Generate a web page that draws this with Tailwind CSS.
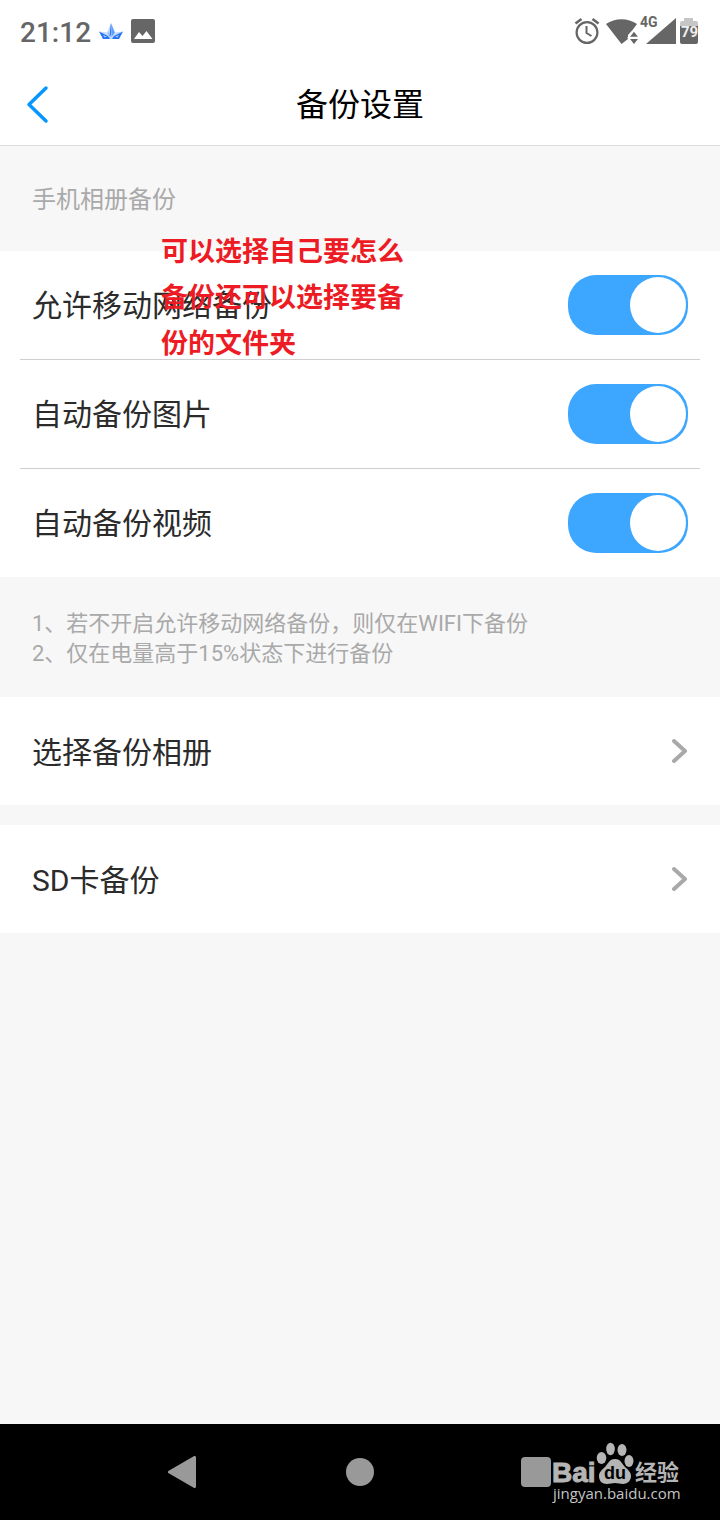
<!DOCTYPE html>
<html lang="zh-CN">
<head>
<meta charset="utf-8">
<meta name="viewport" content="width=device-width, initial-scale=1">
<title>备份设置</title>
<script src="https://cdn.jsdelivr.net/npm/@tailwindcss/browser@4"></script>
</head>
<body class="relative flex min-h-screen flex-col bg-[#f7f7f7] font-['Roboto','Noto_Sans_CJK_SC',sans-serif] text-[#2b2b2b]">

  <!-- Status bar -->
  <div class="flex h-16 items-center bg-white px-5 text-[#666666]">
    <span class="pt-0.5 text-[28px] leading-8 font-medium">21:12</span>
    <svg class="ml-2 h-6 w-6" viewBox="0 0 24 24" aria-hidden="true">
      <path fill="#c3daff" d="M0 11.500l8 1L12 3l4 9.500 8-1L20 19H4z"/>
      <path fill="#2473f5" d="M0 11.500l9 4.500 2 3H4l-1.500-3zM24 11.500L15 16l-2 3h7l1.500-3zM12 3v14.500L10.800 13z"/>
      <path fill="#4a8ffa" d="M12 3l3.800 9.500L12.600 17z" opacity=".8"/>
      <path fill="#5c9bff" d="M8.500 11.500L11 15l-.5 2z"/>
      <path fill="#fff" d="M4 15l4 1.500-2.500 1zM20 15l-4 1.500 2.500 1z" opacity=".6"/>
    </svg>
    <svg class="mb-0.5 ml-2 h-6 w-6" viewBox="0 0 24 24" aria-hidden="true">
      <rect width="24" height="24" rx="2" fill="#666"/>
      <path fill="#fff" d="M3 20l5-7 3.500 4L15.500 12l6 8z"/>
    </svg>
    <div class="mr-0.5 mb-0.5 ml-auto flex items-center">
      <svg class="h-8 w-[124px]" viewBox="0 0 124 32" aria-hidden="true">
        <g fill="none" stroke="#666" stroke-width="2.200">
          <circle cx="13" cy="17.500" r="10.400"/>
          <path d="M12.500 11v7l5 3" stroke-width="2"/>
          <path d="M1.500 8.500l6-4.500M24.500 8.500L18.500 4" stroke-width="2.600"/>
        </g>
        <path fill="#666" d="M32 9C41 2.500 54 2.500 63 9l-4.500 6-4.500 5v4l-6.500 5z"/>
        <path stroke="#fff" stroke-width="1.500" fill="#666" d="M54.500 22.500l5.500-7 5.500 7z"/>
        <path fill="#666" d="M56 24h8l-4 5z"/>
        <path fill="#666" d="M102 3v26H72z"/>
        <path fill="#c6c6c6" d="M110 3h9v3h3q2 0 2 2v4h-18V8q0-2 2-2h2z"/>
        <path fill="#666" d="M106 11h18v16q0 2-2 2h-14q-2 0-2-2z"/>
        <text x="66" y="12" font-size="14" font-weight="700" fill="#666">4G</text>
        <text x="107" y="22" font-size="15" font-weight="700" fill="#eee">79</text>
      </svg>
    </div>
  </div>

  <!-- Title bar -->
  <header class="grid grid-cols-[1fr_auto_1fr] items-center border-b border-[#dedede] bg-white px-6 py-4">
    <button type="button" aria-label="返回" class="h-12 w-8">
      <svg class="h-12 w-8" viewBox="0 0 32 48" fill="none" stroke="#0596ff" stroke-width="3.500" stroke-linecap="round" stroke-linejoin="round"><path d="M22 7L5 23.500 22 40"/></svg>
    </button>
    <h1 class="pt-0.5 text-[32px] leading-[47px] text-black">备份设置</h1>
  </header>

  <main class="flex-1">
    <h2 class="px-8 pt-[38px] pb-[34px] text-2xl leading-[33px] text-[#a9a9a9]">手机相册备份</h2>

    <div class="bg-white text-[30px] leading-9">
      <label class="flex h-27 items-center justify-between px-8">
        <span class="pt-0.5">允许移动网络备份</span>
        <input type="checkbox" role="switch" checked class="h-15 w-30 appearance-none rounded-[28px] bg-[#ccc] p-0.5 before:block before:size-14 before:rounded-full before:bg-white checked:bg-[#3da6ff] checked:before:ml-auto">
      </label>
      <hr class="mx-5 border-[#cfcfcf]">
      <label class="flex h-27 items-center justify-between px-8">
        <span class="pt-0.5">自动备份图片</span>
        <input type="checkbox" role="switch" checked class="h-15 w-30 appearance-none rounded-[28px] bg-[#ccc] p-0.5 before:block before:size-14 before:rounded-full before:bg-white checked:bg-[#3da6ff] checked:before:ml-auto">
      </label>
      <hr class="mx-5 border-[#cfcfcf]">
      <label class="flex h-27 items-center justify-between px-8">
        <span class="pt-0.5">自动备份视频</span>
        <input type="checkbox" role="switch" checked class="h-15 w-30 appearance-none rounded-[28px] bg-[#ccc] p-0.5 before:block before:size-14 before:rounded-full before:bg-white checked:bg-[#3da6ff] checked:before:ml-auto">
      </label>
    </div>

    <div class="px-8 pt-8 pb-7 text-[22px] leading-[30px] text-[#a9a9a9]">
      <p>1、若不开启允许移动网络备份，则仅在WIFI下备份</p>
      <p>2、仅在电量高于15%状态下进行备份</p>
    </div>

    <nav class="flex flex-col gap-5 text-[30px] leading-9">
      <a href="#albums" class="flex h-27 items-center justify-between bg-white px-8">
        <span class="pt-1">选择备份相册</span>
        <svg class="h-8 w-4" viewBox="0 0 16 32" fill="none" stroke="#a9a9a9" stroke-width="4" stroke-linecap="round" stroke-linejoin="round" aria-hidden="true"><path d="M2 6l11 10L2 26"/></svg>
      </a>
      <a href="#sdcard" class="flex h-27 items-center justify-between bg-white px-8">
        <span class="pt-1">SD卡备份</span>
        <svg class="h-8 w-4" viewBox="0 0 16 32" fill="none" stroke="#a9a9a9" stroke-width="4" stroke-linecap="round" stroke-linejoin="round" aria-hidden="true"><path d="M2 6l11 10L2 26"/></svg>
      </a>
    </nav>
  </main>

  <!-- Annotation over the list -->
  <p class="absolute top-[227px] left-[161px] w-[250px] font-['Noto_Sans_CJK_SC',sans-serif] text-[27px] leading-[46px] font-bold text-[#ed1c24]">可以选择自己要怎么备份还可以选择要备份的文件夹</p>

  <!-- System navigation -->
  <footer class="relative grid h-24 grid-cols-[1fr_auto_1fr] items-center bg-black">
    <button type="button" aria-label="返回" class="mr-[150px] justify-self-end">
      <svg class="h-8 w-8" viewBox="0 0 32 32" fill="#999" stroke="#999" stroke-width="3" stroke-linejoin="round"><path d="M5.500 16L30.500 1.500v29z"/></svg>
    </button>
    <button type="button" aria-label="主屏幕" class="size-7 rounded-full bg-[#999]"></button>
    <button type="button" aria-label="最近任务" class="ml-[147px] size-[30px] rounded bg-[#999]"></button>
    <div class="absolute top-4 right-9">
      <svg class="h-16 w-[132px]" viewBox="0 0 132 64" fill="#b5b5b5" aria-label="Baidu 经验">
        <text x="0" y="42" font-family="Liberation Sans" font-size="28" font-weight="700" stroke="#b5b5b5" stroke-width="1">Bai</text>
        <ellipse cx="49.500" cy="18" rx="4.800" ry="6"/><ellipse cx="58.500" cy="9" rx="4.300" ry="6.200"/><ellipse cx="70" cy="10" rx="4.500" ry="6"/><ellipse cx="77" cy="21" rx="4.500" ry="6"/>
        <path d="M63 19c6 0 7 5 10 8s6 5 6 9c0 5-4 8-8 8-3 0-5-1-8-1s-5 1-8 1c-5 0-8-3-8-8 0-4 3-6 6-9s4-8 10-8z"/>
        <text x="52" y="39" font-family="Liberation Sans" font-size="18" font-weight="700" fill="#000">du</text>
        <text x="83" y="40" font-family="Noto Sans CJK SC" font-size="22" font-weight="700">经验</text>
        <text x="1" y="59" font-family="Open Sans" font-size="15" fill="#c4c4c4">jingyan.baidu.com</text>
      </svg>
    </div>
  </footer>
</body>
</html>
